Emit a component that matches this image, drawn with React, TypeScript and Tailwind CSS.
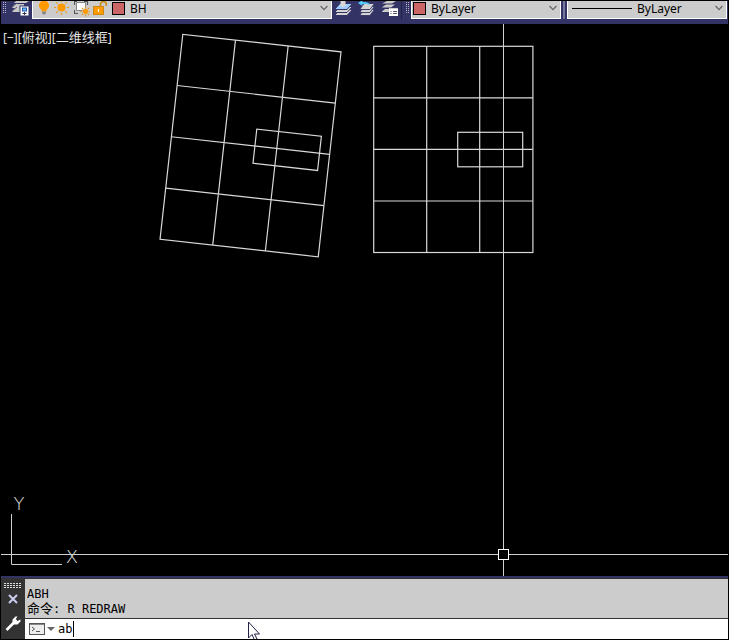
import React from "react";

function Chevron() {
  return (
    <svg className="pointer-events-none absolute right-[3px] top-[4px] h-[6px] w-[8px]" viewBox="0 0 8 6" fill="none" stroke="#666" strokeWidth="1.3">
      <path d="M0.6 1l3.4 3.6L7.4 1" />
    </svg>
  );
}

function Swatch() {
  return <span className="mt-px h-[13px] w-[13px] shrink-0 border border-black bg-[#cc6666]" />;
}

function Picker({ label, value }: { label: string; value: string }) {
  return (
    <select
      aria-label={label}
      defaultValue={value}
      className="h-[16px] min-w-0 flex-1 appearance-none bg-transparent pl-[5px] text-[12px] leading-[16px] text-black outline-none"
    >
      <option>{value}</option>
    </select>
  );
}

function Grip() {
  return (
    <svg className="h-[14px] w-[5px] shrink-0" viewBox="0 0 5 14" stroke="#b8b8cc" strokeWidth="1" strokeDasharray="1 1">
      <path d="M1.500 1v12M3.500 1v12" />
    </svg>
  );
}

function Sheets({ top = "#d4d4d4" }: { top?: string }) {
  return (
    <g fill="#d4d4d4" stroke="#333366" strokeWidth="1">
      <path d="M5 8.500h12.500l-5.500 6H-.5z" />
      <path d="M5 5.500h12.500l-5.500 6H-.5z" />
      <path d="M5 2.500h12.500l-5.500 6H-.5z" fill={top} />
    </g>
  );
}

const toolButton = "h-[17px] w-[19px] shrink-0";
const toolSvg = "h-[17px] w-[19px]";

function LayerProperties() {
  return (
    <button aria-label="Layer properties" className={toolButton}>
      <svg className={toolSvg} viewBox="0 0 19 17">
        <path d="M5 0h13l-3 2H3zM4 3h9v2L9 7H1zM4 7h5v4H1z" fill="#c8c8c8" />
        <path d="M1 6L6 2M1 10l5-4" stroke="#555577" />
        <rect x="9" y="5" width="9" height="10" fill="#fff" stroke="#333366" />
        <rect x="11.500" y="7" width="4" height="3" fill="#66bbff" stroke="#2255aa" />
        <path d="M13.500 11v3M11.500 12.500h4" stroke="#333355" />
      </svg>
    </button>
  );
}

function Toolbar() {
  const combo = "flex h-[18px] min-w-0 grow border-x border-b border-white bg-[#cccccc] relative";
  return (
    <header className="flex h-[23px] shrink-0 items-start overflow-hidden bg-[#333366] pr-px">
      <div className="flex w-[31px] shrink-0 gap-[4px] pl-px">
        <Grip />
        <LayerProperties />
      </div>

      <div className={`${combo} basis-[300px] pl-[5px]`}>
        <button aria-label="Layer on" className="mr-[4px] h-[16px] w-[12px]">
          <svg className="h-[16px] w-[12px]" viewBox="0 0 12 16">
            <circle cx="6" cy="4.500" r="5" fill="#ff9900" />
            <path d="M3.500 7h5v3.500h-5z" fill="#ff9900" />
            <path d="M4 10.500h4v2L6 14l-2-1.500z" fill="#8b8b8b" />
          </svg>
        </button>
        <button aria-label="Layer thawed" className="mr-[5px] h-[16px] w-[15px]">
          <svg className="h-[16px] w-[15px]" viewBox="0 0 15 16">
            <circle cx="7.500" cy="6.500" r="4" fill="#ff9900" />
            <path d="M7.500 0v1M7.500 12v2M0 6.500h2M13 6.500h2M2.200 1.200l1.500 1.500M11.300 10.300l1.500 1.500M12.800 1.200l-1.500 1.500M3.700 10.300l-1.500 1.500" stroke="#ee9911" strokeWidth="1.200" />
          </svg>
        </button>
        <button aria-label="Thawed in viewport" className="mr-[3px] h-[16px] w-[16px]">
          <svg className="h-[16px] w-[16px]" viewBox="0 0 16 16">
            <path d="M0.500 9v3.500H4M0.500 4V0.500H3M10 0.500h3.500V4" fill="none" stroke="#555" strokeWidth="1.200" />
            <path d="M2.500 1.500h9v8h-9z" fill="#fff" stroke="#888" />
            <circle cx="11.500" cy="10.500" r="3" fill="#ff9900" stroke="#cccccc" strokeWidth=".6" />
            <path d="M11.500 5.500v1.500M11.500 14v1.500M6.500 10.500h1.500M15 10.500h1M8 7l1 1M14 13l1 1M15 7l-1 1M8 14l1-1" stroke="#dd9922" strokeWidth="1.200" />
          </svg>
        </button>
        <button aria-label="Layer unlocked" className="mr-[5px] h-[16px] w-[14px]">
          <svg className="h-[16px] w-[14px]" viewBox="0 0 14 16">
            <rect x="0.500" y="5.500" width="10" height="8" fill="#ff9900" stroke="#cc8811" />
            <path d="M7.500 5V2.500L9 .8h3l1.300 1.700V5" fill="none" stroke="#cc8811" strokeWidth="1.600" />
            <path d="M5.500 8v3" stroke="#fff" strokeWidth="1.200" />
          </svg>
        </button>
        <Swatch />
        <Picker label="Layer" value="BH" />
        <Chevron />
      </div>

      <div className="flex w-[79px] shrink-0 pl-[3px]">
        <button aria-label="Make object's layer current" className={`${toolButton} mr-[4px]`}>
          <svg className={toolSvg} viewBox="0 0 19 17">
            <Sheets top="#99ccff" />
            <path d="M5.500 0h5v4h1.500L8 6.500 4 4h1.500z" fill="#d8d8d8" />
          </svg>
        </button>
        <button aria-label="Previous layer" className={`${toolButton} mr-[5px]`}>
          <svg className={toolSvg} viewBox="0 0 19 17">
            <g transform="translate(2 0) scale(.83 1)"><Sheets /></g>
            <path d="M0 2l4.500-3v2c4-.3 7 .5 7.500 3.200C10 3 7.500 2.700 4.500 3v2z" fill="#55ccff" />
          </svg>
        </button>
        <button aria-label="Layer states" className={toolButton}>
          <svg className={toolSvg} viewBox="0 0 19 17">
            <path d="M5 0h9l-4 2.500H0zM4 3.500h9l-4 3H-.5zM3 8h4v3H-.5z" fill="#ccc" />
            <rect x="7" y="7" width="9" height="8" fill="#fff" />
            <path d="M7 7.500h9" stroke="#ccc" />
            <path d="M8.500 10.500h1M11 10.500h4M8.500 12.500h1M11 12.500h4" stroke="#555577" />
          </svg>
        </button>
        <span className="mr-[3px] h-[18px] w-px bg-[#222244]" />
        <Grip />
      </div>

      <div className={`${combo} basis-[150px] pl-px`}>
        <Swatch />
        <Picker label="Color" value="ByLayer" />
        <Chevron />
      </div>
      <div className="h-[18px] w-[6px] shrink-0 px-[2px]">
        <div className="h-full border-x border-[#777799] bg-[#222244]" />
      </div>
      <div className={`${combo} basis-[160px] pl-[4px]`}>
        <span className="mt-[7px] h-px w-[60px] shrink-0 bg-black" />
        <Picker label="Linetype" value="ByLayer" />
        <Chevron />
      </div>
    </header>
  );
}

function Grid() {
  return (
    <g fill="none" stroke="#d9d9d9" strokeWidth="1.200">
      <rect width="159.200" height="206.200" />
      <path d="M53 0v206.200M106 0v206.200M0 51.500h159.200M0 103.100h159.200M0 154.700h159.200" />
      <rect x="84" y="86" width="65" height="34.500" />
    </g>
  );
}

function DrawingArea() {
  return (
    <main className="relative min-h-0 flex-1 overflow-hidden bg-black">
      <svg className="block h-full w-full" role="img" aria-label="Model space">
        <g transform="translate(181.800 10.300) rotate(6.340)"><Grid /></g>
        <g transform="translate(372.700 22.300)"><Grid /></g>
        <path d="M10.500 490v50.500H61" fill="none" stroke="#d0d0d0" />
        <g fill="#e0e0e0" fontFamily="'DejaVu Sans', sans-serif" fontSize="18" fontWeight="200" textAnchor="middle">
          <text x="18" y="486">Y</text>
          <text x="71" y="539">X</text>
        </g>
        <g stroke="#ccd2cc">
          <line x1="0" y1="530.500" x2="100%" y2="530.500" />
          <line x1="502.500" y1="0" x2="502.500" y2="100%" />
          <rect x="497.500" y="525.500" width="10" height="10" fill="#000" stroke="#fff" />
        </g>
      </svg>
      <div className="absolute left-[2px] top-[5px] whitespace-nowrap text-[12px] leading-[16px] text-[#e4e4e4]">
        <button>[−]</button>
        <button>[<span className="text-[13px]">俯视</span>]</button>
        <button>[<span className="text-[13px]">二维线框</span>]</button>
      </div>
    </main>
  );
}

function CommandLine() {
  return (
    <footer className="relative flex h-[63px] shrink-0 overflow-hidden border-t-2 border-[#333366] bg-[#333333] pt-px font-['DejaVu_Sans_Mono','Noto_Sans_CJK_SC',monospace] text-[12px]">
      <div className="flex w-[24px] shrink-0 flex-col items-center pt-[4px]">
        <svg className="h-[5px] w-[18px]" viewBox="0 0 18 5" stroke="#ddd" strokeDasharray="2 1">
          <path d="M0 .5h18M0 2.500h18M0 4.500h18" />
        </svg>
        <button aria-label="Close" className="mt-[6px] flex h-[10px] w-[16px]">
          <svg className="h-[10px] w-[16px]" viewBox="0 0 16 10" fill="none" stroke="#ccccee" strokeWidth="2">
            <path d="M4 1l8 8M12 1l-8 8" />
          </svg>
        </button>
        <button aria-label="Customize" className="mt-[12px] h-[16px] w-[16px]">
          <svg className="h-[16px] w-[16px]" viewBox="0 0 16 16">
            <path d="M1.500 14L9 6.500" stroke="#fff" strokeWidth="2.600" fill="none" />
            <path d="M7.500 6.500V3.500l3-3h2L10.800 3l1.700 2L15.500 3.500v2L12.500 8.500H9z" fill="#fff" />
          </svg>
        </button>
      </div>
      <div className="flex min-w-0 flex-1 flex-col">
        <div className="h-[39px] bg-[#cccccc] pl-[2px] pt-[8px] leading-[15px] text-black">
          <p>ABH</p>
          <p className="whitespace-pre"><span className="text-[13px] leading-none">命令</span>: R REDRAW</p>
        </div>
        <div className="flex min-h-0 flex-1 items-center border-t border-[#333333] bg-white pl-[4px]">
          <button aria-label="Recent commands" className="h-[14px] w-[27px]">
            <svg className="h-[14px] w-[27px]" viewBox="0 0 27 14">
              <rect x="0.500" y="1.500" width="15" height="11" fill="#eee" stroke="#555" />
              <path d="M1 2.500h14" stroke="#888" />
              <path d="M3 5l2.500 2L3 9M7 9.500h4" fill="none" stroke="#555" />
              <path d="M18 5h8l-4 4z" fill="#666" />
            </svg>
          </button>
          <div className="flex min-w-0 flex-1 items-center pl-[2px]">
            <input aria-label="Command" defaultValue="ab" className="h-[16px] w-[16px] border-r border-black bg-transparent text-black outline-none" />
          </div>
        </div>
      </div>
      <svg className="pointer-events-none absolute left-[246px] top-[43px] h-[20px] w-[14px]" viewBox="0 0 14 20">
        <path d="M1.500 1v16l3.500-3.500 2.500 5.500 2.500-1-2.500-5h5z" fill="#fff" stroke="#222244" />
      </svg>
    </footer>
  );
}

export default function App() {
  return (
    <div className="flex h-screen flex-col overflow-hidden bg-black p-px font-['Noto_Sans','Noto_Sans_CJK_SC',sans-serif]">
      <Toolbar />
      <DrawingArea />
      <CommandLine />
    </div>
  );
}
